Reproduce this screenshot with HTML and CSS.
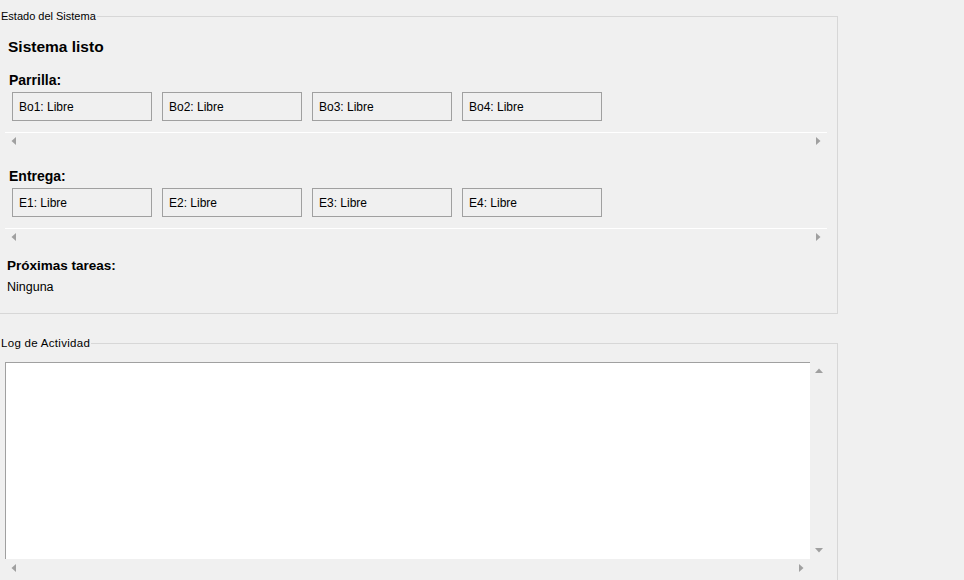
FILE: index.html
```html
<!DOCTYPE html>
<html lang="es">
<head>
<meta charset="utf-8">
<title>Estado del Sistema</title>
<link rel="stylesheet" href="styles.css">
</head>
<body>
<div class="window">
  <fieldset class="panel status">
    <legend>Estado del Sistema</legend>
    <div class="headline">Sistema listo</div>

    <div class="label first">Parrilla:</div>
    <div class="scrollpane">
      <div class="viewport">
        <div class="slot">Bo1: Libre</div>
        <div class="slot">Bo2: Libre</div>
        <div class="slot">Bo3: Libre</div>
        <div class="slot">Bo4: Libre</div>
      </div>
      <div class="hscroll lined">
        <span class="btn"><svg width="7" height="10" viewBox="0 0 7 10"><polygon points="6,1 6,9 1.5,5" fill="#a0a0a0"/></svg></span>
        <span class="track"></span>
        <span class="btn"><svg width="7" height="10" viewBox="0 0 7 10"><polygon points="1,1 1,9 5.5,5" fill="#a0a0a0"/></svg></span>
      </div>
    </div>

    <div class="label second">Entrega:</div>
    <div class="scrollpane">
      <div class="viewport">
        <div class="slot">E1: Libre</div>
        <div class="slot">E2: Libre</div>
        <div class="slot">E3: Libre</div>
        <div class="slot">E4: Libre</div>
      </div>
      <div class="hscroll lined">
        <span class="btn"><svg width="7" height="10" viewBox="0 0 7 10"><polygon points="6,1 6,9 1.5,5" fill="#a0a0a0"/></svg></span>
        <span class="track"></span>
        <span class="btn"><svg width="7" height="10" viewBox="0 0 7 10"><polygon points="1,1 1,9 5.5,5" fill="#a0a0a0"/></svg></span>
      </div>
    </div>

    <div class="tasks-title">Próximas tareas:</div>
    <div class="tasks">Ninguna</div>
  </fieldset>

  <fieldset class="panel log">
    <legend>Log de Actividad</legend>
    <div class="logpane">
      <div class="logrow">
        <div class="logtext"></div>
        <div class="vscroll">
          <span class="vbtn"><svg width="10" height="7" viewBox="0 0 10 7"><polygon points="1,6 9,6 5,1.5" fill="#a0a0a0"/></svg></span>
          <span class="track"></span>
          <span class="vbtn"><svg width="10" height="7" viewBox="0 0 10 7"><polygon points="1,1 9,1 5,5.5" fill="#a0a0a0"/></svg></span>
        </div>
      </div>
      <div class="logrow">
        <div class="hscroll wide">
          <span class="btn"><svg width="7" height="10" viewBox="0 0 7 10"><polygon points="6,1 6,9 1.5,5" fill="#a0a0a0"/></svg></span>
          <span class="track"></span>
          <span class="btn"><svg width="7" height="10" viewBox="0 0 7 10"><polygon points="1,1 1,9 5.5,5" fill="#a0a0a0"/></svg></span>
        </div>
        <div class="corner"></div>
      </div>
    </div>
  </fieldset>
</div>
</body>
</html>
```

FILE: styles.css
```css
html, body {
  margin: 0;
  padding: 0;
  background: #f0f0f0;
  height: 580px;
  overflow: hidden;
}

body {
  font-family: "Liberation Sans", Arial, sans-serif;
  color: #000;
}

.window {
  display: flex;
  flex-direction: column;
}

.panel {
  box-sizing: border-box;
  width: 838px;
  margin: 0;
  padding: 0;
  border: 1px solid #d7d7d7;
  border-left: none;
  min-width: 0;
}

.panel legend {
  padding: 0 1px;
  margin: 0;
  font-size: 11px;
  line-height: 12px;
}

.log legend {
  font-size: 11.5px;
  letter-spacing: 0.3px;
}

.status {
  margin-top: 10px;
  padding-bottom: 18px;
}

.headline {
  margin: 15px 0 0 8px;
  font-size: 15.5px;
  line-height: 19px;
  font-weight: bold;
}

.label {
  margin-left: 9px;
  font-size: 14px;
  line-height: 17px;
  font-weight: bold;
}

.label.first { margin-top: 16px; }
.label.second { margin-top: 19px; }

.scrollpane {
  margin-left: 5px;
  width: 822px;
}

.viewport {
  display: flex;
  gap: 10px;
  padding: 3px 0 11px 7px;
}

.slot {
  box-sizing: border-box;
  width: 140px;
  height: 29px;
  border: 1px solid #a0a0a0;
  padding: 2px 0 0 6px;
  font-size: 12px;
  line-height: 25px;
}

.hscroll {
  display: flex;
  height: 17px;
}

.hscroll.lined {
  height: 16px;
  border-top: 1px solid #ffffff;
}

.btn, .vbtn {
  flex: 0 0 17px;
  display: flex;
  align-items: center;
  justify-content: center;
}

.btn svg, .vbtn svg { display: block; }

.vbtn { flex-basis: 17px; height: 17px; }

.track { flex: 1; }

.tasks-title {
  margin: 12px 0 0 7px;
  font-size: 13.5px;
  line-height: 17px;
  font-weight: bold;
}

.tasks {
  margin: 6px 0 0 7px;
  font-size: 12.5px;
  line-height: 15px;
}

.log {
  margin-top: 23px;
  height: 300px;
}

.logpane {
  margin: 13px 0 0 5px;
  width: 822px;
}

.logrow {
  display: flex;
}

.logtext {
  box-sizing: border-box;
  width: 805px;
  height: 197px;
  background: #ffffff;
  border-top: 1px solid #a0a0a0;
  border-left: 1px solid #a0a0a0;
}

.vscroll {
  width: 17px;
  display: flex;
  flex-direction: column;
}

.hscroll.wide {
  width: 805px;
}

.corner {
  width: 17px;
  height: 17px;
}
```
